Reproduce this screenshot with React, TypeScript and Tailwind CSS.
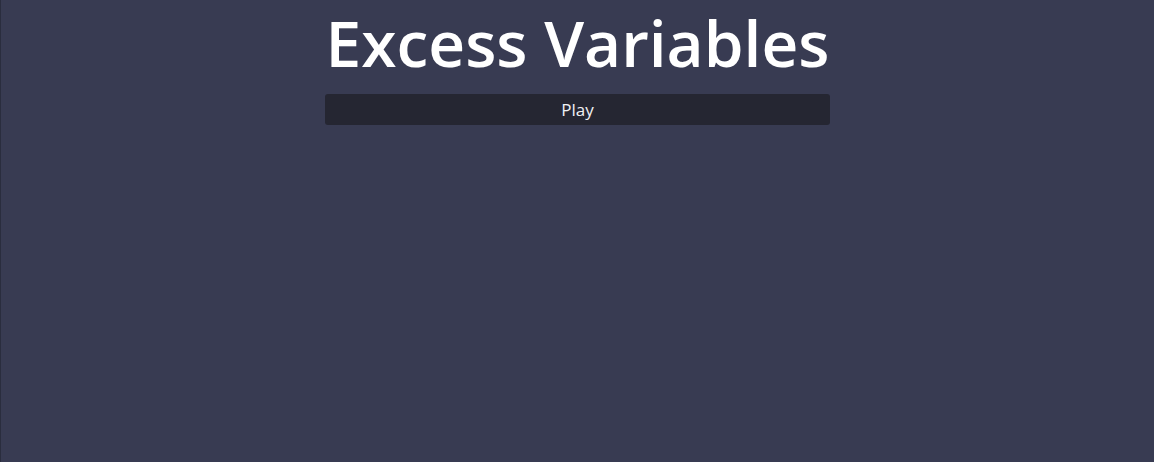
export default function App() {
  return (
    <div className="w-[1154px] h-[462px] bg-[#383b52] border-l border-[#2a2d3e] flex flex-col items-center font-['Open_Sans',sans-serif]">
      <h1 className="mt-[11px] text-[64px] leading-none h-[66px] font-semibold text-white">
        Excess Variables
      </h1>
      <button className="mt-[17px] w-[505px] h-[31px] rounded-[3px] bg-[#252632] text-[17px] font-[500] text-[#f0f0f4]">
        Play
      </button>
    </div>
  );
}
